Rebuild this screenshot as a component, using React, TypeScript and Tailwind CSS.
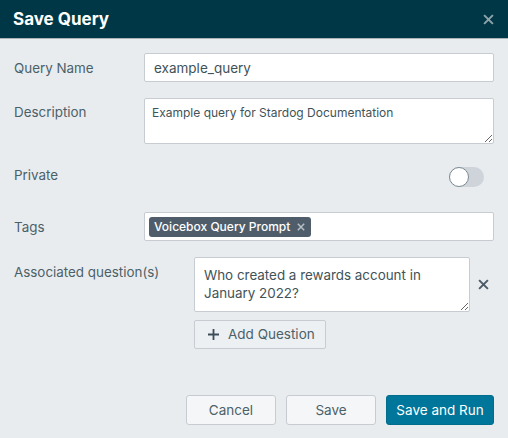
import React from 'react';

// Save Query dialog
const font = { fontFamily: 'Inter, "Noto Sans", sans-serif' };

const XIcon: React.FC<{ className?: string; size?: number; stroke?: number }> = ({ className, size = 10, stroke = 1.8 }) => (
    <svg width={size} height={size} viewBox="0 0 10 10" className={className} fill="none" stroke="currentColor" strokeWidth={stroke} strokeLinecap="butt">
        <path d="M1 1 L9 9 M9 1 L1 9" />
    </svg>
);

const Label: React.FC<{ children: React.ReactNode; className?: string }> = ({ children, className = '' }) => (
    <span className={`text-[13.4px] leading-[20px] text-[#4b6168] ${className}`}>{children}</span>
);

const FooterBtn: React.FC<{ label: string; primary?: boolean; className?: string }> = ({ label, primary, className = '' }) => (
    <button
        className={`h-[30px] rounded-[3px] text-[13.5px] ${primary
            ? 'bg-[#00769a] text-white border border-[#006d8d] w-[108px]'
            : 'bg-[#f5f6f8] text-[#4b6168] border border-[#c6ccd1] w-[90px]'} ${className}`}
    >
        {label}
    </button>
);

export default function App() {
    return (
        <div style={font} className="w-[508px] h-[438px] bg-[#e9ecef] flex flex-col">
            {/* Header */}
            <div className="h-[39px] bg-[#003747] border-b border-[#a9b3b8] flex items-center justify-between pl-[13px] pr-[14px]">
                <span className="text-white font-bold text-[17px] leading-none">Save Query</span>
                <XIcon className="text-[#8ea3aa]" size={11} stroke={1.8} />
            </div>

            {/* Body */}
            <div className="flex-1 flex flex-col px-[14px] pt-[14px]">
                {/* Query Name */}
                <div className="flex items-center">
                    <Label className="w-[130px]">Query Name</Label>
                    <input
                        defaultValue="example_query"
                        className="flex-1 h-[29px] bg-white border border-[#c6ccd1] rounded-[2px] px-[9px] text-[13.5px] text-[#3f5358] outline-none"
                    />
                </div>

                {/* Description */}
                <div className="flex items-start mt-[16px]">
                    <Label className="w-[130px] pt-[4px]">Description</Label>
                    <textarea
                        defaultValue="Example query for Stardog Documentation"
                        className="flex-1 h-[46px] bg-white border border-[#c6ccd1] rounded-[2px] px-[7px] pt-[5px] text-[12px] leading-[18px] text-[#3f5358] outline-none"
                    />
                </div>

                {/* Private */}
                <div className="flex items-center justify-between mt-[22px] h-[22px] pr-[10px]">
                    <Label className="-mt-[4px]">Private</Label>
                    <div className="w-[35px] h-[20px] rounded-full bg-[#ced4da] flex items-center">
                        <div className="w-[20px] h-[20px] rounded-full bg-white border border-[#7b8a93]" />
                    </div>
                </div>

                {/* Tags */}
                <div className="flex items-center mt-[24px]">
                    <Label className="w-[130px]">Tags</Label>
                    <div className="flex-1 h-[29px] bg-white border border-[#c6ccd1] rounded-[2px] flex items-center pl-[4px]">
                        <span className="h-[20px] bg-[#4f5d6b] rounded-[3px] flex items-center gap-[7px] pl-[5px] pr-[6px] text-white text-[12px] font-medium leading-none">
                            Voicebox Query Prompt
                            <XIcon className="text-[#b9c1c8]" size={8} stroke={1.8} />
                        </span>
                    </div>
                </div>

                {/* Associated questions */}
                <div className="flex items-start mt-[16px]">
                    <Label className="w-[180px] pt-[5px]">Associated question(s)</Label>
                    <div className="flex flex-col">
                        <div className="flex items-center">
                            <textarea
                                defaultValue={'Who created a rewards account in January 2022?'}
                                className="w-[276px] h-[55px] bg-white border border-[#c6ccd1] rounded-[2px] pl-[9px] pr-[6px] pt-[8px] text-[13.4px] leading-[18px] text-[#3f5358] outline-none"
                            />
                            <XIcon className="text-[#4b5a66] ml-[8px]" size={11} stroke={1.8} />
                        </div>
                        <button className="mt-[8px] w-[132px] h-[29px] bg-[#edf0f3] border border-[#c6ccd1] rounded-[2px] flex items-center pl-[13px] gap-[9px] text-[13.5px] text-[#4b6168]">
                            <svg width="11" height="11" viewBox="0 0 11 11" fill="none" stroke="#3d4d58" strokeWidth="1.8">
                                <path d="M5.5 0 V11 M0 5.5 H11" />
                            </svg>
                            Add Question
                        </button>
                    </div>
                </div>

                {/* Footer */}
                <div className="flex-1" />
                <div className="flex justify-end gap-[10px] mb-[13px]">
                    <FooterBtn label="Cancel" />
                    <FooterBtn label="Save" />
                    <FooterBtn label="Save and Run" primary />
                </div>
            </div>
        </div>
    );
}
